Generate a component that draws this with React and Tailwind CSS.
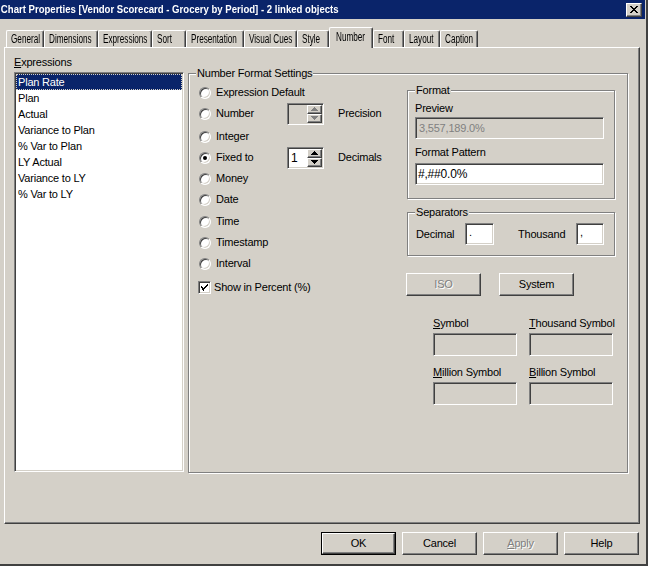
import React from 'react';

const sunken =
  'border border-t-[#808080] border-l-[#808080] border-r-white border-b-white shadow-[inset_1px_1px_0_#404040,inset_-1px_-1px_0_#d4d0c8]';
const raised =
  'border border-t-white border-l-white border-r-[#404040] border-b-[#404040] shadow-[inset_-1px_-1px_0_#808080]';
const etched = 'border border-[#808080] shadow-[1px_1px_0_#fff,inset_1px_1px_0_#fff]';
// the dialog's tab captions and title use a condensed face; squeeze Liberation Sans to match
const squeeze = 'inline-block origin-left whitespace-nowrap';

const tabs = [
  { label: 'General', w: 'w-[38px]' },
  { label: 'Dimensions', w: 'w-[54px]' },
  { label: 'Expressions', w: 'w-[54px]' },
  { label: 'Sort', w: 'w-[34px]' },
  { label: 'Presentation', w: 'w-[58px]' },
  { label: 'Visual Cues', w: 'w-[53px]' },
  { label: 'Style', w: 'w-[32px]' },
  { label: 'Number', w: 'w-[44px]', active: true },
  { label: 'Font', w: 'w-[31px]' },
  { label: 'Layout', w: 'w-[36px]' },
  { label: 'Caption', w: 'w-[38px]' },
];

const expressions = [
  'Plan Rate',
  'Plan',
  'Actual',
  'Variance to Plan',
  '% Var to Plan',
  'LY Actual',
  'Variance to LY',
  '% Var to LY',
];

function Radio({ checked }) {
  return (
    <span className="flex w-[12px] h-[12px] shrink-0 items-center justify-center rounded-full bg-white border border-t-[#808080] border-l-[#808080] border-r-white border-b-white shadow-[inset_1px_1px_0_#404040,inset_-1px_-1px_0_#d4d0c8]">
      {checked && <span className="w-[4px] h-[4px] rounded-full bg-black" />}
    </span>
  );
}

function Arrow({ up, disabled }) {
  return (
    <svg width="7" height="4" viewBox="0 0 7 4" shapeRendering="crispEdges">
      <polygon
        points={up ? '3.5,0 7,4 0,4' : '0,0 7,0 3.5,4'}
        fill={disabled ? '#808080' : '#000'}
      />
    </svg>
  );
}

function Spin({ value, disabled }) {
  return (
    <div className={`${sunken} flex shrink-0 w-[37px] h-[22px] p-px ${disabled ? 'bg-[#d4d0c8]' : 'bg-white'}`}>
      <div className="flex-1 pl-[2px] leading-[18px] text-[12px]">{value}</div>
      <div className="flex flex-col w-[15px]">
        <div className={`${raised} flex flex-1 items-center justify-center bg-[#d4d0c8]`}>
          <Arrow up disabled={disabled} />
        </div>
        <div className={`${raised} flex flex-1 items-center justify-center bg-[#d4d0c8]`}>
          <Arrow disabled={disabled} />
        </div>
      </div>
    </div>
  );
}

function Group({ title, className = '', children }) {
  return (
    <div className={`${etched} flex flex-col ${className}`}>
      <span className="-mt-[7px] ml-[7px] self-start px-px bg-[#d4d0c8] leading-[13px]">{title}</span>
      {children}
    </div>
  );
}

function Button({ children, disabled, def, className = '' }) {
  const inner = (
    <div
      className={`${raised} flex h-full w-full items-center justify-center ${
        disabled ? 'text-[#808080] [text-shadow:1px_1px_0_#fff]' : ''
      }`}
    >
      {children}
    </div>
  );
  if (def) {
    return <div className={`border border-black w-[75px] h-[23px] ${className}`}>{inner}</div>;
  }
  return <div className={`w-[75px] h-[23px] ${className}`}>{inner}</div>;
}

function RadioRow({ label, checked, className = '', children }) {
  return (
    <div className={`flex h-[21px] items-center ${className}`}>
      <Radio checked={checked} />
      <span className="ml-[5px] min-w-[71px] whitespace-nowrap">{label}</span>
      {children}
    </div>
  );
}

export default function App() {
  return (
    <div className="w-[648px] h-[566px] overflow-hidden bg-[#d4d0c8] border-r-2 border-b-2 border-r-[#404040] border-b-[#404040] flex flex-col text-[11px] leading-[13px] tracking-[-0.2px] text-black font-['Liberation_Sans',Arial,sans-serif]">
      {/* title bar */}
      <div className="mr-px h-[19px] shrink-0 bg-[#0a246a] flex items-center justify-between pr-[3px]">
        <span className={`${squeeze} scale-x-[0.87] pl-px text-white font-bold text-[11px] tracking-normal`}>
          Chart Properties [Vendor Scorecard - Grocery by Period] - 2 linked objects
        </span>
        <div className={`${raised} bg-[#d4d0c8] w-[16px] h-[14px] flex items-center justify-center`}>
          <svg width="8" height="7" viewBox="0 0 8 7" shapeRendering="crispEdges">
            <path d="M0 0h2v1h-2zM6 0h2v1h-2zM1 1h2v1h-2zM5 1h2v1h-2zM2 2h4v1h-4zM3 3h2v1h-2zM2 4h4v1h-4zM1 5h2v1h-2zM5 5h2v1h-2zM0 6h2v1h-2zM6 6h2v1h-2z" fill="#000" />
          </svg>
        </div>
      </div>

      {/* tabs */}
      <div className="mt-[8px] ml-[6px] flex h-[20px] items-end">
        {tabs.map((t) =>
          t.active ? (
            <div
              key={t.label}
              className={`${t.w} relative z-10 -mb-px h-[21px] bg-[#d4d0c8] border-l border-t border-r border-l-white border-t-white border-r-[#404040] shadow-[inset_-1px_0_0_#808080] rounded-t-[2px] pl-[6px] pt-[2px] leading-[14px]`}
            >
              <span className={`${squeeze} scale-x-[0.68] text-[12px] tracking-normal`}>{t.label}</span>
            </div>
          ) : (
            <div
              key={t.label}
              className={`${t.w} h-[17px] border-l border-t border-r border-l-white border-t-white border-r-[#404040] shadow-[inset_-1px_0_0_#808080] rounded-t-[2px] pl-[4px] pt-[1px] leading-[14px]`}
            >
              <span className={`${squeeze} scale-x-[0.68] text-[12px] tracking-normal`}>{t.label}</span>
            </div>
          )
        )}
      </div>

      {/* panel */}
      <div className={`ml-[4px] w-[636px] h-[477px] shrink-0 ${raised} flex pt-[8px] pl-[9px]`}>
        <div className="flex flex-col w-[170px]">
          <span className="leading-[13px]">
            <span className="underline">E</span>xpressions
          </span>
          <div className={`${sunken} mt-[3px] h-[400px] bg-white p-px`}>
            {expressions.map((e, i) => (
              <div
                key={e}
                className={`h-[16px] leading-[16px] pl-[2px] ${
                  i === 0
                    ? 'bg-[#0a246a] text-white outline-1 outline-dotted outline-[#d4d0c8] -outline-offset-1'
                    : ''
                }`}
              >
                {e}
              </div>
            ))}
          </div>
        </div>

        <Group title="Number Format Settings" className="ml-[4px] mt-[17px] w-[440px] h-[400px]">
          <div className="flex">
            <div className="flex flex-col w-[218px] pl-[10px] pt-[2px]">
              <RadioRow label="Expression Default" />
              <RadioRow label="Number">
                <Spin disabled />
                <span className="ml-[14px]">Precision</span>
              </RadioRow>
              <RadioRow label="Integer" className="mt-[2px]" />
              <RadioRow label="Fixed to" checked>
                <Spin value="1" />
                <span className="ml-[14px]">Decimals</span>
              </RadioRow>
              <RadioRow label="Money" />
              <RadioRow label="Date" />
              <RadioRow label="Time" className="mt-px" />
              <RadioRow label="Timestamp" />
              <RadioRow label="Interval" />
              <div className="mt-[3px] -ml-px flex h-[21px] items-center">
                <span className={`${sunken} w-[13px] h-[13px] bg-white flex items-center justify-center`}>
                  <svg width="7" height="7" viewBox="0 0 7 7" shapeRendering="crispEdges">
                    <path d="M6 0h1v1h-1zM5 1h2v1h-2zM0 2h1v1h-1zM4 2h2v1h-2zM0 3h2v1h-2zM3 3h2v1h-2zM1 4h3v1h-3zM1 5h2v1h-2zM2 6h1v1h-1z" fill="#000" />
                  </svg>
                </span>
                <span className="ml-[3px]">Show in Percent (%)</span>
              </div>
            </div>

            <div className="flex flex-col w-[208px] pt-[10px]">
              <Group title="Format" className="h-[109px]">
                <span className="ml-[7px] mt-[5px]">Preview</span>
                <div className={`${sunken} ml-[7px] mt-[2px] w-[189px] h-[22px] flex items-center pl-[3px] text-[#808080]`}>
                  3,557,189.0%
                </div>
                <span className="ml-[7px] mt-[7px]">Format Pattern</span>
                <div className={`${sunken} ml-[7px] mt-[4px] w-[189px] h-[22px] bg-white flex items-center pl-[2px] text-[12px]`}>
                  #,##0.0%
                </div>
              </Group>

              <Group title="Separators" className="mt-[13px] h-[44px]">
                <div className="mt-[4px] ml-[8px] flex items-center">
                  <span className="w-[49px]">Decimal</span>
                  <div className={`${sunken} w-[29px] h-[22px] bg-white pl-[3px] leading-[16px]`}>.</div>
                  <span className="ml-[24px] w-[58px]">Thousand</span>
                  <div className={`${sunken} w-[28px] h-[22px] bg-white pl-[3px] leading-[16px]`}>,</div>
                </div>
              </Group>

              <div className="mt-[17px] -ml-px flex gap-[18px]">
                <Button disabled>ISO</Button>
                <Button>System</Button>
              </div>

              <div className="ml-[26px] mt-[21px] grid grid-cols-[84px_84px] gap-x-[12px]">
                <div className="flex flex-col">
                  <span>
                    <span className="underline">S</span>ymbol
                  </span>
                  <div className={`${sunken} mt-[3px] h-[23px]`} />
                </div>
                <div className="flex flex-col">
                  <span className="whitespace-nowrap">
                    <span className="underline">T</span>housand Symbol
                  </span>
                  <div className={`${sunken} mt-[3px] h-[23px]`} />
                </div>
                <div className="flex flex-col mt-[10px]">
                  <span>
                    <span className="underline">M</span>illion Symbol
                  </span>
                  <div className={`${sunken} mt-[3px] h-[23px]`} />
                </div>
                <div className="flex flex-col mt-[10px]">
                  <span>
                    <span className="underline">B</span>illion Symbol
                  </span>
                  <div className={`${sunken} mt-[3px] h-[23px]`} />
                </div>
              </div>
            </div>
          </div>
        </Group>
      </div>

      {/* buttons */}
      <div className="mt-[8px] flex justify-end gap-[6px] pr-[7px]">
        <Button def>OK</Button>
        <Button>Cancel</Button>
        <Button disabled>
          <span>
            <span className="underline">A</span>pply
          </span>
        </Button>
        <Button>Help</Button>
      </div>
    </div>
  );
}
